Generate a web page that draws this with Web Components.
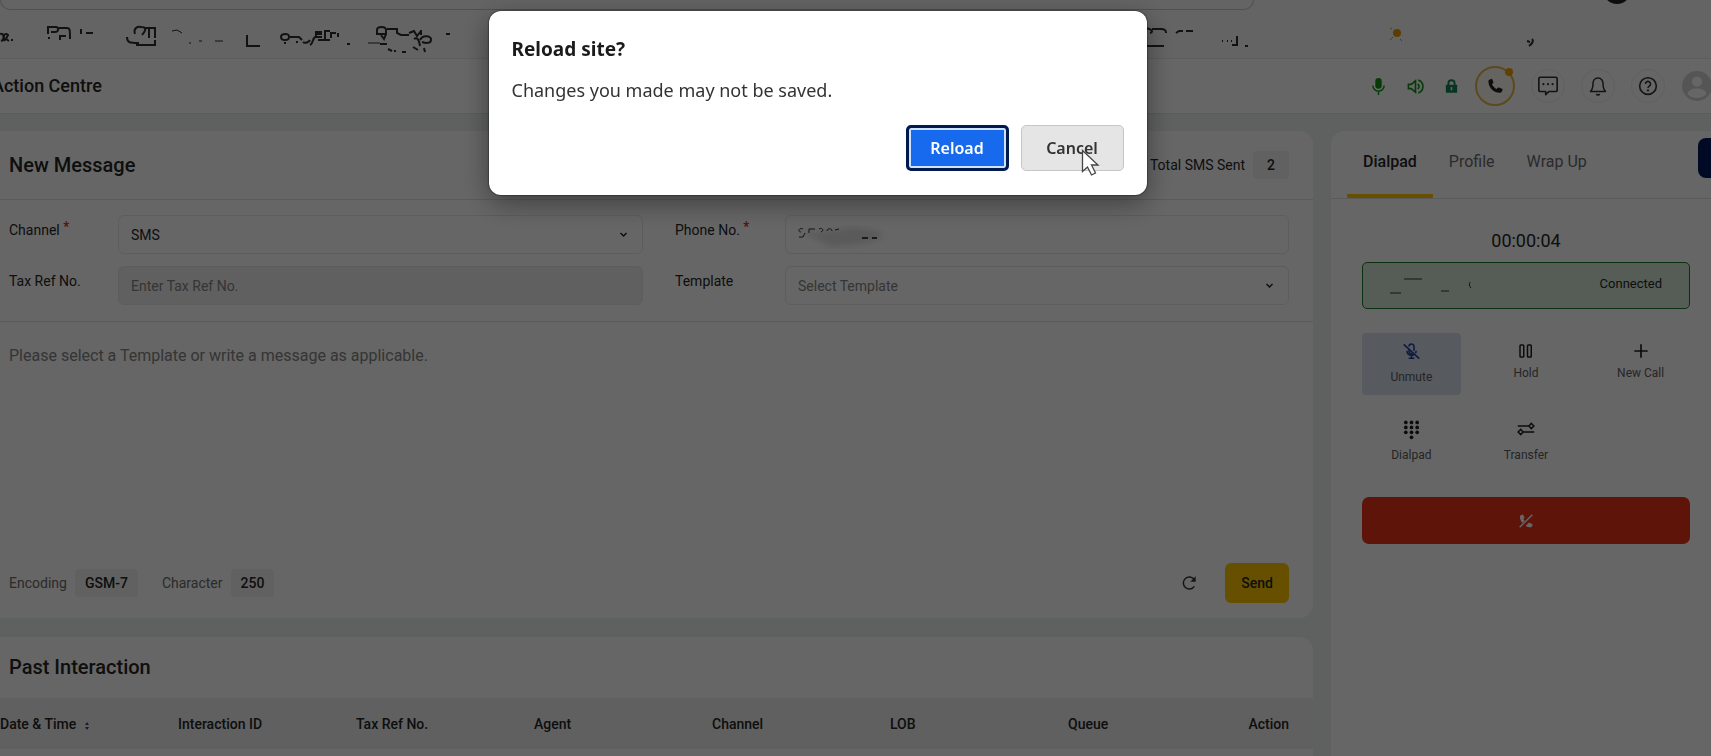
<!DOCTYPE html>
<html lang="en">
<head>
<meta charset="utf-8">
<title>Action Centre</title>
<style>
html, body { height: 100%; margin: 0; overflow: hidden; }
body {
  font-family: Roboto, "Liberation Sans", sans-serif;
  font-size: 14px;
  line-height: 20px;
  color: #262626;
  background: #fff;
}
</style>
</head>
<body>

<agent-desktop>
  <bookmarks-bar></bookmarks-bar>
  <app-header title="Action Centre"></app-header>
  <main-layout>
    <message-form></message-form>
    <past-interaction></past-interaction>
    <call-panel slot="side"></call-panel>
  </main-layout>
</agent-desktop>

<reload-dialog>
  <span slot="title">Reload site?</span>
  <span slot="message">Changes you made may not be saved.</span>
</reload-dialog>

<script>
const ICONS = {
  mic: '<g fill="none" stroke="currentColor" stroke-width="2"><path d="M4 10.500a8 8 0 0 0 16 0M12 18.500V24"/></g><rect x="7.500" y="0" width="9" height="15" rx="4.500" fill="currentColor"/>',
  speaker: '<g fill="none" stroke="currentColor" stroke-width="2.300"><path d="M2 9v6h4l6 5V4L6 9z"/><path d="M15 8.500a4 4 0 0 1 0 7M16 3a9.500 9.500 0 0 1 0 18"/></g>',
  lock: '<rect x="3" y="9" width="18" height="13" rx="1" fill="currentColor"/><path d="M7 10V7a5 5 0 0 1 10 0v3" fill="none" stroke="currentColor" stroke-width="3"/><path d="M12 13v5" stroke="#fff" stroke-width="2.500"/>',
  phone: '<path fill="currentColor" d="M7 2.500 3.500 4C2 13 10 22 20 21l2-3.500c.3-.8 0-1.500-.7-1.800l-4-1.700c-.6-.2-1.200 0-1.600.4L14.200 16C11.500 14.500 9.300 12.300 8 9.500l1.500-1.400c.4-.4.6-1 .3-1.600L8.500 3.200C8.200 2.600 7.600 2.300 7 2.500z"/>',
  chat: '<g fill="none" stroke="currentColor" stroke-width="1.800" stroke-linejoin="round"><path d="M3.500 2.500h17a1.500 1.500 0 0 1 1.500 1.500v12.500a1.500 1.500 0 0 1-1.500 1.500H13l-3.500 3.500V18h-6A1.500 1.500 0 0 1 2 16.500V4a1.500 1.500 0 0 1 1.500-1.500z"/></g><g fill="currentColor"><circle cx="7" cy="10" r="1.200"/><circle cx="12" cy="10" r="1.200"/><circle cx="17" cy="10" r="1.200"/></g>',
  bell: '<g fill="none" stroke="currentColor" stroke-width="1.800" stroke-linejoin="round"><path d="M12 2.500c-4 0-6 3-6 6.500 0 5-1 7.500-3 9.500h18c-2-2-3-4.500-3-9.500 0-3.500-2-6.500-6-6.500z"/><path d="M10 21.500a2.200 2.200 0 0 0 4 0"/></g>',
  help: '<g fill="none" stroke="currentColor" stroke-width="1.900"><circle cx="12" cy="12" r="10"/><path d="M9 9.500a3 3 0 1 1 4.500 2.600c-1 .6-1.500 1.200-1.500 2.400"/></g><circle cx="12" cy="17.300" r="1.300" fill="currentColor"/>',
  user: '<circle cx="12" cy="12" r="12" fill="#d4d4d4"/><circle cx="12" cy="8.500" r="4" fill="#fff"/><path d="M4.500 18.500c0-6 15-6 15 0-4 4-11 4-15 0z" fill="#fff"/>',
  micOff: '<g fill="none" stroke="currentColor" stroke-width="2.200"><path d="M1 2l22 20"/><path d="M8.500 5a3.500 3.500 0 0 1 7 0v6"/><path d="M8.500 8.500V12a3.500 3.500 0 0 0 5 3M18.500 11c0 1.500-.3 2.500-.8 3.500M5.500 11a6.500 6.500 0 0 0 10 5.500M12 17.500V21M8 21.500h8"/></g>',
  hold: '<g fill="none" stroke="currentColor" stroke-width="2"><rect x="4" y="4" width="5" height="16" rx="1"/><rect x="14" y="4" width="5" height="16" rx="1"/></g>',
  plus: '<path d="M12 2v20M2 12h20" stroke="currentColor" stroke-width="2.500"/>',
  dialpad: '<g fill="currentColor"><circle cx="4" cy="2" r="2.600"/><circle cx="12" cy="2" r="2.600"/><circle cx="20" cy="2" r="2.600"/><circle cx="4" cy="9" r="2.600"/><circle cx="12" cy="9" r="2.600"/><circle cx="20" cy="9" r="2.600"/><circle cx="4" cy="16" r="2.600"/><circle cx="12" cy="16" r="2.600"/><circle cx="20" cy="16" r="2.600"/><circle cx="12" cy="23" r="2.600"/></g>',
  transfer: '<g fill="none" stroke="currentColor" stroke-width="2"><path d="M1 8h15M8 16h15"/><path d="M16 8l3-3.500L22.500 8 19 11.500zM1.500 16L5 12.500 8 16l-3 3.500z"/></g>',
  hangup: '<path fill="currentColor" d="M6 2.500 3 4c-.5 4 1 8 3.500 11L10 11.500 8 9.500 9.300 8c.4-.4.5-1 .3-1.600L8 3.200C7.500 2.500 6.800 2.200 6 2.500zM11.500 19c2.500 1.700 5.500 2.600 8.500 2.300l1.800-3c.3-.8 0-1.500-.7-1.800l-4-1.700c-.6-.2-1.200 0-1.600.4L14.300 16.500z"/><path d="M21.500 2.500l-19 19" stroke="currentColor" stroke-width="2"/>',
  refresh: '<path d="M20 17a9 9 0 1 1 0-10" fill="none" stroke="currentColor" stroke-width="2.200"/><path d="M22 2v8h-8z" fill="currentColor"/>',
  chevron: '<path d="M4 8l8 8 8-8" fill="none" stroke="currentColor" stroke-width="4"/>',
};

function define(name, html) {
  const template = document.createElement('template');
  template.innerHTML = '<style>:host, *, *::before { box-sizing: border-box; }</style>' + html;
  customElements.define(name, class extends HTMLElement {
    constructor() {
      super();
      this.attachShadow({mode: 'open'}).appendChild(template.content.cloneNode(true));
    }
  });
}

class UiIcon extends HTMLElement {
  connectedCallback() {
    const size = this.getAttribute('size') || 20;
    if (!this.shadowRoot) this.attachShadow({mode: 'open'});
    this.shadowRoot.innerHTML = '<style>:host { display: inline-flex; flex: none; } svg { overflow: visible; }</style>' +
      `<svg width="${size}" height="${size}" viewBox="0 0 24 24" aria-hidden="true">${ICONS[this.getAttribute('name')]}</svg>`;
  }
}
customElements.define('ui-icon', UiIcon);

define('agent-desktop', `
<style>
:host { display: flex; flex-direction: column; height: 100vh; overflow: hidden; }
</style>
<slot></slot>`);

// Bottom edge of the address bar and the smudged-out bookmark labels
define('bookmarks-bar', `
<style>
:host { display: block; flex: none; height: 59px; overflow: hidden; background: #f9f9f9; border-bottom: 1px solid #e9e9e9; }
.top { display: flex; justify-content: space-between; height: 10px; }
.address { flex: none; width: 1254px; height: 10px; border: 1px solid #c8c8c8; border-top: 0; border-radius: 0 0 16px 16px; }
.profile { overflow: visible; margin-right: 80px; }
.marks { display: flex; justify-content: space-between; }
.marks svg { flex: none; }
</style>
<div class="top">
  <div class="address"></div>
  <svg class="profile" width="28" height="10"><circle cx="14" cy="-10" r="14" fill="#222"/></svg>
</div>
<div class="marks">
  <svg width="470" height="46" fill="none" stroke="#2d2d2d" stroke-width="2">
    <path d="M0 24c4-2 5 6 1 7M5 31c-3-7 1-8 3-6l-2 4 3 2M11 30h2"/>
    <path d="M48 24v-7h8c3 0 3 5-1 5h-4M58 18h9c3 0 3 2 3 11M60 30v-4h6M48 28h2M81 19v5M86 23h7"/>
    <path d="M135 24c-2-6 3-8 6-7 6 0 5 3 1 8M145 18h10v10M149 19v9M127 27c0 6 3 6 12 6M136 35h19v-5"/>
    <path d="M172 21l5-1 5 3M189 33h2M199 31h3M215 31h8" stroke-width="1"/>
    <path d="M247 25v11h13"/>
    <path d="M285 34v-2M281 27c0-4 9-4 8 0 0 4-8 4-8 0M290 27h9l3 3M296 32h2M303 32c2 2 6 0 7-2M310 35c4-2 2-8 6-8M315 22h6v2h-5v3h6M325 29v-8h5M331 28v-5h5M318 30h12M338 23v4M347 34h3"/>
    <path d="M377 20c0-4 9-4 9 0v4h-9zM381 25l3 4 2-5M387 19h10v4l4 2h8M409 23l5-2 3 5 4-5M421 20v5M414 29c3-2 5 0 6 7M420 30c3-6 12-4 11 0 0 4-6 3-9 2M380 34h7M388 39l4 2M394 41h2M402 42h4M413 37l5 3M424 38l1 4M446 24h4"/>
    <path d="M368 33h12" stroke-width="1"/>
  </svg>
  <svg width="571" height="46" fill="none" stroke="#2d2d2d" stroke-width="2">
    <path d="M0 20c10-4 15 2 10 3M12 19h9c4 0 5 1 5 4M0 36h24M36 23l3-2h4M46 21h7M82 31h1M87 31h1M91 31h1M97 26v9h-5M105 36h3M387 31l3 1M392 29c2 2 0 5-3 7"/>
    <circle cx="257" cy="23" r="4" fill="#e69a00" stroke="none"/>
    <path d="M250 30l3-3M250 18l2 1M260 29l2 2" stroke="#c99228" stroke-width="1"/>
  </svg>
</div>`);

class AppHeader extends HTMLElement {
  constructor() {
    super();
    this.attachShadow({mode: 'open'}).innerHTML = `
<style>
:host, * { box-sizing: border-box; }
:host { display: flex; flex: none; align-items: center; justify-content: space-between; height: 55px; margin: 0 -2px 0 -8px; background: #fff; border-bottom: 1px solid #e0e3e3; }
h1 { margin: 0; font-size: 18px; font-weight: 500; line-height: 24px; }
nav { display: flex; align-items: center; gap: 16px; }
.status { display: flex; align-items: center; gap: 20px; color: #159015; }
.status ui-icon:last-child { color: #17835a; }
button { position: relative; display: flex; align-items: center; justify-content: center; width: 34px; height: 34px; padding: 0; border: 1px solid #f0f0f0; border-radius: 50%; background: none; color: #333; }
.call { width: 40px; height: 40px; border: 2px solid #e5b94c; background: #fffaf0; color: #222; }
.call::after { content: ""; position: absolute; top: 0; right: 0; width: 8px; height: 8px; border-radius: 50%; background: #f0a400; }
.user { width: 32px; height: 32px; border: 0; }
</style>
<h1></h1>
<nav>
  <div class="status">
    <ui-icon name="mic" size="17"></ui-icon>
    <ui-icon name="speaker" size="17"></ui-icon>
    <ui-icon name="lock" size="15"></ui-icon>
  </div>
  <button class="call" aria-label="Call"><ui-icon name="phone" size="18"></ui-icon></button>
  <button aria-label="Chat"><ui-icon name="chat" size="22"></ui-icon></button>
  <button aria-label="Notifications"><ui-icon name="bell"></ui-icon></button>
  <button aria-label="Help"><ui-icon name="help"></ui-icon></button>
  <button class="user" aria-label="Account"><ui-icon name="user" size="30"></ui-icon></button>
</nav>`;
    this.shadowRoot.querySelector('h1').textContent = this.getAttribute('title');
  }
}
customElements.define('app-header', AppHeader);

define('main-layout', `
<style>
:host { display: grid; grid-template-columns: minmax(0, 1fr) 380px; gap: 18px; flex: 1; min-height: 0; padding-top: 17px; background: #edf2f0; }
.cards { display: flex; flex-direction: column; gap: 19px; min-width: 0; }
</style>
<div class="cards"><slot></slot></div>
<slot name="side"></slot>`);

define('message-form', `
<style>
:host { display: block; background: #fff; border-radius: 0 14px 14px 0; }
header { display: flex; align-items: center; justify-content: space-between; height: 69px; padding: 0 24px 0 9px; border-bottom: 1px solid #e2e2e2; }
h2 { margin: 0; font-size: 20px; line-height: 24px; font-weight: 500; }
.count { display: flex; align-items: center; gap: 8px; }
output { display: block; padding: 4px 10px; border-radius: 4px; background: #f2f2f2; font-weight: 500; }
header output { padding: 4px 14px; }
.fields { display: grid; grid-template-columns: 109px minmax(0, 525fr) 32px 110px minmax(0, 504fr); row-gap: 12px; padding: 15px 24px 16px 9px; border-bottom: 1px solid #dedede; }
.fields label { padding-top: 5px; }
.fields label.second { grid-column: 4; }
i { color: #d02020; font-style: normal; line-height: 0; vertical-align: 3px; }
.control { position: relative; display: flex; }
input, select { width: 100%; height: 39px; padding: 0 12px; border: 1px solid #e8e8e8; border-radius: 6px; background: #fff; font: inherit; color: #262626; appearance: none; }
select.empty, ::placeholder { color: #858585; opacity: 1; }
input:disabled { background: #f0f0f0; }
.control ui-icon { position: absolute; right: 15px; top: 15px; pointer-events: none; }
.smudge { position: absolute; left: 10px; top: 8px; }
textarea { display: block; width: 100%; height: 241px; padding: 22px 9px; border: 0; resize: none; background: none; font: inherit; font-size: 16px; line-height: 24px; }
footer { display: flex; align-items: center; gap: 24px; padding: 0 24px 15px 9px; }
footer .count { color: #6b6b6b; }
footer output { color: #262626; }
.actions { display: flex; align-items: center; gap: 24px; margin-left: auto; }
.refresh { display: flex; padding: 4px; border: 0; background: none; color: #333; }
.send { height: 40px; padding: 0 16px; border: 0; border-radius: 6px; background: #ffc800; font: inherit; font-weight: 500; color: #262626; }
</style>
<header>
  <h2>New Message</h2>
  <div class="count"><span>Total SMS Sent</span><output>2</output></div>
</header>
<div class="fields">
  <label for="channel">Channel <i>*</i></label>
  <div class="control"><select id="channel"><option>SMS</option></select><ui-icon name="chevron" size="9"></ui-icon></div>
  <label for="phone" class="second">Phone No. <i>*</i></label>
  <div class="control"><input id="phone" type="tel">
    <svg class="smudge" width="96" height="28">
      <defs><filter id="soft"><feGaussianBlur stdDeviation="3"/></filter></defs>
      <path d="M6 9l22 0 20-3 12-2 24 4 4 6-18 6-34 4-12-7z" fill="#e0e0e0" filter="url(#soft)"/>
      <path d="M8 6c-4-2-6 3-2 3M4 14h4l2-4M14 10V6h6M24 6c4-2 5 2 2 3M32 8c0-3 5-3 5 0M40 7l4-1" fill="none" stroke="#333"/>
      <path d="M67 15h6M77 15h5" stroke="#444" stroke-width="2"/>
    </svg>
  </div>
  <label for="taxref">Tax Ref No.</label>
  <div class="control"><input id="taxref" placeholder="Enter Tax Ref No." disabled></div>
  <label for="template" class="second">Template</label>
  <div class="control"><select id="template" class="empty"><option>Select Template</option></select><ui-icon name="chevron" size="9"></ui-icon></div>
</div>
<textarea aria-label="Message" placeholder="Please select a Template or write a message as applicable."></textarea>
<footer>
  <div class="count"><span>Encoding</span><output>GSM-7</output></div>
  <div class="count"><span>Character</span><output>250</output></div>
  <div class="actions">
    <button class="refresh" aria-label="Reset"><ui-icon name="refresh" size="16"></ui-icon></button>
    <button class="send">Send</button>
  </div>
</footer>`);

define('past-interaction', `
<style>
:host { display: block; flex: 1; overflow: hidden; background: #fff; border-radius: 0 14px 0 0; }
h2 { margin: 0; padding: 18px 9px 19px; font-size: 20px; line-height: 24px; font-weight: 500; }
table { width: 100%; table-layout: fixed; border-collapse: collapse; }
th { width: 178px; height: 51px; padding: 0; background: #f0f0f0; font-weight: 500; text-align: left; }
th:last-child { width: auto; padding-right: 24px; text-align: right; }
svg { margin-left: 4px; vertical-align: -2px; }
</style>
<h2>Past Interaction</h2>
<table>
  <thead>
    <tr>
      <th>Date &amp; Time <svg width="6" height="10" viewBox="0 0 6 10" fill="#3c4a80"><path d="M1 4l2-3 2 3zM1 6l2 3 2-3z"/></svg></th>
      <th>Interaction ID</th>
      <th>Tax Ref No.</th>
      <th>Agent</th>
      <th>Channel</th>
      <th>LOB</th>
      <th>Queue</th>
      <th>Action</th>
    </tr>
  </thead>
</table>`);

define('call-action', `
<style>
:host { display: flex; }
button { display: flex; flex: 1; flex-direction: column; align-items: center; gap: 4px; height: 62px; padding: 9px 0 0; border: 0; border-radius: 4px; background: none; font: inherit; font-size: 12px; line-height: 18px; color: #5c5c5c; }
::slotted(ui-icon) { height: 18px; align-items: center; color: #1f1f1f; }
:host([active]) button { gap: 8px; background: #dae0ee; }
:host([active]) ::slotted(ui-icon) { color: #24429c; }
:host([spaced]) button { gap: 8px; }
</style>
<button><slot name="icon"></slot><slot></slot></button>`);

define('call-panel', `
<style>
:host { display: block; background: #fff; border-radius: 14px 0 0 0; overflow: hidden; }
.tabs { display: flex; align-items: flex-start; height: 68px; padding: 0 0 0 16px; border-bottom: 1px solid #e2e2e2; }
.tabs a { height: 67px; padding: 19px 16px 0; font-size: 16px; line-height: 24px; color: #6b6b6b; text-decoration: none; }
.tabs a.on { border-bottom: 4px solid #ffc800; border-radius: 1px; font-weight: 500; color: #262626; }
.more { width: 13px; height: 40px; margin: 7px 0 0 auto; padding: 0; border: 0; border-radius: 8px 0 0 8px; background: #001a5e; }
.body { padding: 30px 21px 0 31px; }
time { display: block; font-size: 18px; line-height: 24px; text-align: center; }
.state { display: flex; align-items: center; justify-content: space-between; height: 47px; margin: 9px 0 24px; padding: 0 27px; border: 1px solid #1c7a2a; border-radius: 5px; background: #d8e6d8; font-size: 13px; }
.state span { padding-bottom: 3px; }
.actions { display: grid; grid-template-columns: repeat(3, 1fr); gap: 16px; }
.end { display: flex; align-items: center; justify-content: center; width: 100%; height: 47px; margin-top: 24px; border: 0; border-radius: 7px; background: #eb3214; color: #fff; }
</style>
<nav class="tabs">
  <a href="#dialpad" class="on">Dialpad</a>
  <a href="#profile">Profile</a>
  <a href="#wrapup">Wrap Up</a>
  <button class="more" aria-label="More"></button>
</nav>
<div class="body">
  <time>00:00:04</time>
  <div class="state">
    <svg width="84" height="20" fill="none" stroke="#333"><path d="M14 3h18M0 17h11M51 15h8M80 6c-1 2-1 4 1 6"/></svg>
    <span>Connected</span>
  </div>
  <div class="actions">
    <call-action active><ui-icon slot="icon" name="micOff" size="17"></ui-icon>Unmute</call-action>
    <call-action><ui-icon slot="icon" name="hold" size="18"></ui-icon>Hold</call-action>
    <call-action><ui-icon slot="icon" name="plus" size="16"></ui-icon>New Call</call-action>
    <call-action spaced><ui-icon slot="icon" name="dialpad" size="17"></ui-icon>Dialpad</call-action>
    <call-action spaced><ui-icon slot="icon" name="transfer" size="18"></ui-icon>Transfer</call-action>
  </div>
  <button class="end" aria-label="End call"><ui-icon name="hangup" size="16"></ui-icon></button>
</div>`);

define('reload-dialog', `
<style>
:host { position: fixed; inset: 0; display: flex; align-items: flex-start; justify-content: center; padding: 11px 76px 0 0; background: rgba(0, 0, 0, .6); font-family: "Noto Sans", "Open Sans", sans-serif; color: #1b1b1b; }
section { width: 658px; padding: 24px 23px; border-radius: 12px; background: #fff; box-shadow: 0 0 2px #000, 0 8px 28px rgba(0, 0, 0, .4); }
h2 { margin: 0; font-size: 19px; line-height: 28px; font-weight: 700; }
p { margin: 13px 0 21px; font-size: 18px; line-height: 28px; color: #333; }
.buttons { display: flex; justify-content: flex-end; gap: 12px; }
button { width: 103px; height: 46px; padding: 0; border: 1px solid #c6c6c6; border-radius: 5px; background: #e5e5e5; font: inherit; font-size: 16px; font-weight: 600; color: #333; }
.primary { border: 3px solid #001a4d; background: #1769ee; box-shadow: inset 0 0 0 2px #cfe2ff; color: #fff; }
.cancel { position: relative; }
.cursor { position: absolute; left: 59px; top: 23px; }
</style>
<section role="dialog" aria-modal="true">
  <h2><slot name="title"></slot></h2>
  <p><slot name="message"></slot></p>
  <div class="buttons">
    <button class="primary">Reload</button>
    <button class="cancel">Cancel
      <svg class="cursor" width="20" height="28" viewBox="0 0 20 28"><path d="M1.500 1.500v21l5-4.500 4 8 4-2-4-8H17z" fill="#fff" stroke="#444" stroke-width="1.300"/></svg>
    </button>
  </div>
</section>`);
</script>
</body>
</html>
